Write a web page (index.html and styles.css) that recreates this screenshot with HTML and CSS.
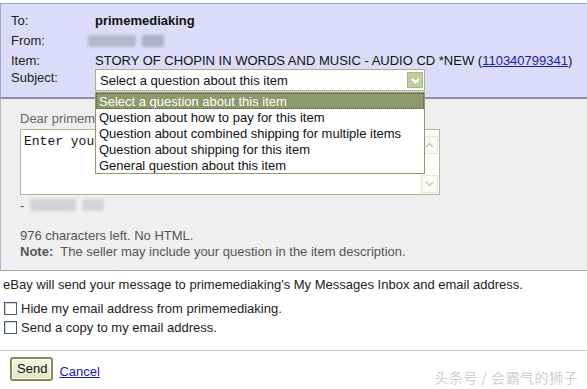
FILE: index.html
```html
<!DOCTYPE html>
<html>
<head>
<meta charset="utf-8">
<link rel="stylesheet" href="styles.css">
</head>
<body>
<div class="page">
  <div class="header">
    <div class="row"><span class="label">To:</span><span class="value bold">primemediaking</span></div>
    <div class="row"><span class="label">From:</span><span class="value"><span class="blur blur-a"></span><span class="blur blur-b"></span></span></div>
    <div class="row"><span class="label">Item:</span><span class="value">STORY OF CHOPIN IN WORDS AND MUSIC - AUDIO CD *NEW (<a href="#">110340799341</a>)</span></div>
    <div class="row subject-row"><span class="label">Subject:</span>
      <span class="select-wrap">
        <span class="select">Select a question about this item
          <span class="arrow"><svg width="13" height="13" viewBox="0 0 13 13"><path d="M3 5 L6.5 8.5 L10 5" fill="none" stroke="#fff" stroke-width="2"/></svg></span>
        </span>
        <span class="menu">
          <span class="opt sel">Select a question about this item</span>
          <span class="opt">Question about how to pay for this item</span>
          <span class="opt">Question about combined shipping for multiple items</span>
          <span class="opt">Question about shipping for this item</span>
          <span class="opt">General question about this item</span>
        </span>
      </span>
    </div>
  </div>
  <div class="body">
    <div class="dear">Dear primemediaking,</div>
    <div class="textarea">
      <div class="ta-text">Enter your question here...</div>
      <div class="scroll">
        <span class="sbtn"><svg width="9" height="6" viewBox="0 0 9 6"><path d="M1 5 L4.5 1.5 L8 5" fill="none" stroke="#c4c8b8" stroke-width="1.5"/></svg></span>
        <span class="sbtn"><svg width="9" height="6" viewBox="0 0 9 6"><path d="M1 1 L4.5 4.5 L8 1" fill="none" stroke="#c4c8b8" stroke-width="1.5"/></svg></span>
      </div>
    </div>
    <div class="sig">- <span class="blur blur-c"></span><span class="blur blur-d"></span></div>
    <div class="info first">976 characters left. No HTML.</div>
    <div class="info"><b>Note:</b>&nbsp; The seller may include your question in the item description.</div>
  </div>
  <div class="notice">eBay will send your message to primemediaking's My Messages Inbox and email address.</div>
  <div class="checks">
    <label class="check"><span class="box"></span>Hide my email address from primemediaking.</label>
    <label class="check"><span class="box"></span>Send a copy to my email address.</label>
  </div>
  <div class="actions">
    <span class="send">Send</span>
    <a href="#" class="cancel">Cancel</a>
    <span class="watermark">头条号 / 会霸气的狮子</span>
  </div>
</div>
</body>
</html>
```
FILE: styles.css
```css
html, body { margin: 0; padding: 0; background: #fff; }
body {
  font-family: "Liberation Sans", Arial, sans-serif;
  font-size: 13px;
  color: #111;
  width: 587px;
  height: 389px;
  overflow: hidden;
}
.page { padding-top: 3px; }
.header {
  background: #dcdcfa;
  border-top: 1px solid #a6a6c6;
  border-left: 1px solid #a6a6c6;
  border-bottom: 2px solid #8e8eaa;
  padding: 6px 0 5px 10px;
  height: 82px;
}
.row { display: flex; height: 20px; align-items: center; }
.label { width: 84px; flex: none; color: #222; }
.value { color: #111; }
.value a { color: #1a1aa6; }
.bold { font-weight: bold; }
.blur { display: inline-block; height: 12px; background: #b8b8cc; vertical-align: middle; border-radius: 2px; filter: blur(1.5px); }
.blur-a { width: 48px; margin-left: -7px; }
.blur-b { width: 22px; margin-left: 6px; background: #aeaec4; }
.subject-row { height: 18px; margin-top: -2px; }
.select-wrap { position: relative; }
.select {
  display: flex; align-items: center;
  width: 324px; height: 20px;
  padding-left: 4px;
  background: #fff;
  border: 1px solid #a9b583;
  position: relative;
  top: 3px;
}
.arrow {
  position: absolute; right: 1px; top: 2px;
  width: 16px; height: 16px;
  background: #c4cc9e;
  border: 1px solid #aab58a;
  box-sizing: border-box;
  display: flex; align-items: center; justify-content: center;
}
.menu {
  position: absolute; left: 0; top: 26px;
  width: 328px;
  background: #fff;
  border: 1px solid #8f996c;
  display: flex; flex-direction: column;
  z-index: 5;
}
.opt { height: 16px; line-height: 18px; padding-left: 3px; white-space: nowrap; color: #111; overflow: hidden; }
.opt.sel { background: #8e996b; color: #fff; outline: 1px dotted #555; outline-offset: -1px; }
.body {
  background: #efefef;
  border-left: 1px solid #b4b4cc;
  border-bottom: 1px solid #a8a8c4;
  padding: 12px 0 10px 19px;
  height: 149px;
}
.dear { color: #666; height: 16px; }
.textarea {
  margin-top: 2px;
  width: 418px; height: 64px;
  background: #fff;
  border: 1px solid #b3b88f;
  display: flex;
  justify-content: space-between;
}
.ta-text { font-family: "Liberation Mono", "Courier New", monospace; font-size: 13px; padding: 4px 0 0 3px; color: #111; width: 72px; overflow: hidden; white-space: nowrap; }
.scroll { width: 17px; display: flex; flex-direction: column; justify-content: space-between; padding: 6px 1px 1px 0; }
.sbtn { height: 16px; border: 1px solid #e4e6dc; background: #f8f8f4; display: flex; align-items: center; justify-content: center; }
.sig { margin-top: 2px; color: #555; height: 16px; display: flex; align-items: center; }
.blur-c { width: 46px; margin-left: 6px; background: #d2d2d2; }
.blur-d { width: 22px; margin-left: 6px; background: #d4d4d4; }
.info { color: #555; height: 16px; line-height: 16px; }
.info.first { margin-top: 15px; }
.notice { padding: 6px 0 0 3px; height: 19px; color: #222; }
.checks { padding-top: 3px; }
.check { display: flex; align-items: center; height: 19px; padding-left: 4px; color: #222; }
.box { width: 11px; height: 11px; border: 1px solid #4a5a72; background: #fff; margin-right: 4px; box-shadow: inset 1px 1px 1px #ccd; }
.actions {
  margin-top: 13px;
  border-top: 1px solid #c8c8c8;
  padding: 6px 0 0 10px;
  display: flex;
  align-items: center;
  position: relative;
  height: 30px;
  box-sizing: border-box;
}
.send {
  display: inline-block;
  padding: 2px 4px 3px 5px;
  border: 2px solid #7f914a;
  border-radius: 3px;
  background: linear-gradient(#f6f8e8, #dfe4c4);
  color: #111;
  font-size: 13px;
  box-shadow: inset 0 0 0 1px #fff;
}
.cancel { margin-left: 6px; color: #1a1ab0; margin-top: 6px; }
.watermark {
  position: absolute; right: 9px; top: 16px;
  color: #cfcfcf;
  font-family: "Noto Sans CJK SC", sans-serif;
  font-size: 14px;
  letter-spacing: 0.5px;
}
```
